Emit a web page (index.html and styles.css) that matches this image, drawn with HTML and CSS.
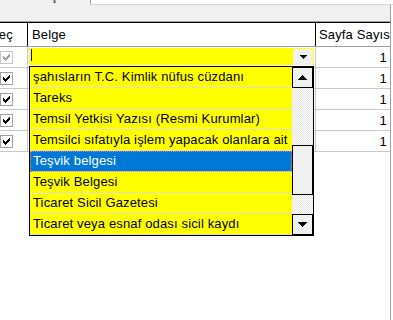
FILE: index.html
```html
<!DOCTYPE html>
<html lang="tr">
<head>
    <meta charset="UTF-8">
    <title>Belge Listesi</title>
    <link rel="stylesheet" href="styles.css">
</head>
<body>
    <div class="panel">
        <div class="toolbar">
            <span class="toolbar-label">ş</span>
            <div class="toolbar-input"></div>
        </div>
        <div class="grid">
            <div class="grid-row grid-head">
                <div class="cell c-sel"><span class="head-clip">Seç</span></div>
                <div class="cell c-doc">Belge</div>
                <div class="cell c-pages">Sayfa Sayısı</div>
            </div>
            <div class="grid-row">
                <div class="cell c-sel">
                    <span class="check check-dim">
                        <svg width="7" height="7" viewBox="0 0 7 7" shape-rendering="crispEdges"><path d="M6 0h1v1h-1zM5 1h2v1h-2zM0 2h1v1h-1zM4 2h3v1h-3zM0 3h2v1h-2zM3 3h3v1h-3zM0 4h5v1h-5zM1 5h3v1h-3zM2 6h1v1h-1z"/></svg>
                    </span>
                </div>
                <div class="cell c-doc editing">
                    <div class="editor">
                        <span class="caret"></span>
                        <span class="editor-button">
                            <svg width="7" height="4" viewBox="0 0 7 4" shape-rendering="crispEdges"><path d="M0 0h7v1h-1v1h-1v1h-1v1h-1v-1h-1v-1h-1v-1h-1z"/></svg>
                        </span>
                    </div>
                </div>
                <div class="cell c-pages">1</div>
            </div>
            <div class="grid-row">
                <div class="cell c-sel">
                    <span class="check">
                        <svg width="7" height="7" viewBox="0 0 7 7" shape-rendering="crispEdges"><path d="M6 0h1v1h-1zM5 1h2v1h-2zM0 2h1v1h-1zM4 2h3v1h-3zM0 3h2v1h-2zM3 3h3v1h-3zM0 4h5v1h-5zM1 5h3v1h-3zM2 6h1v1h-1z"/></svg>
                    </span>
                </div>
                <div class="cell c-doc"></div>
                <div class="cell c-pages">1</div>
            </div>
            <div class="grid-row">
                <div class="cell c-sel">
                    <span class="check">
                        <svg width="7" height="7" viewBox="0 0 7 7" shape-rendering="crispEdges"><path d="M6 0h1v1h-1zM5 1h2v1h-2zM0 2h1v1h-1zM4 2h3v1h-3zM0 3h2v1h-2zM3 3h3v1h-3zM0 4h5v1h-5zM1 5h3v1h-3zM2 6h1v1h-1z"/></svg>
                    </span>
                </div>
                <div class="cell c-doc"></div>
                <div class="cell c-pages">1</div>
            </div>
            <div class="grid-row">
                <div class="cell c-sel">
                    <span class="check">
                        <svg width="7" height="7" viewBox="0 0 7 7" shape-rendering="crispEdges"><path d="M6 0h1v1h-1zM5 1h2v1h-2zM0 2h1v1h-1zM4 2h3v1h-3zM0 3h2v1h-2zM3 3h3v1h-3zM0 4h5v1h-5zM1 5h3v1h-3zM2 6h1v1h-1z"/></svg>
                    </span>
                </div>
                <div class="cell c-doc"></div>
                <div class="cell c-pages">1</div>
            </div>
            <div class="grid-row">
                <div class="cell c-sel">
                    <span class="check">
                        <svg width="7" height="7" viewBox="0 0 7 7" shape-rendering="crispEdges"><path d="M6 0h1v1h-1zM5 1h2v1h-2zM0 2h1v1h-1zM4 2h3v1h-3zM0 3h2v1h-2zM3 3h3v1h-3zM0 4h5v1h-5zM1 5h3v1h-3zM2 6h1v1h-1z"/></svg>
                    </span>
                </div>
                <div class="cell c-doc"></div>
                <div class="cell c-pages">1</div>
            </div>
        </div>

        <!-- open combo list, drawn over the grid -->
        <div class="dropdown">
            <div class="dropdown-items">
                <div class="item">şahısların T.C. Kimlik nüfus cüzdanı</div>
                <div class="item">Tareks</div>
                <div class="item">Temsil Yetkisi Yazısı (Resmi Kurumlar)</div>
                <div class="item">Temsilci sıfatıyla işlem yapacak olanlara ait</div>
                <div class="item selected">Teşvik belgesi</div>
                <div class="item">Teşvik Belgesi</div>
                <div class="item">Ticaret Sicil Gazetesi</div>
                <div class="item">Ticaret veya esnaf odası sicil kaydı</div>
            </div>
            <div class="scrollbar">
                <div class="scroll-btn">
                    <svg width="9" height="5" viewBox="0 0 9 5" shape-rendering="crispEdges"><path d="M4 0h1v1h1v1h1v1h1v1h1v1h-9v-1h1v-1h1v-1h1v-1h1z"/></svg>
                </div>
                <div class="scroll-track">
                    <div class="scroll-thumb"></div>
                </div>
                <div class="scroll-btn">
                    <svg width="9" height="5" viewBox="0 0 9 5" shape-rendering="crispEdges"><path d="M0 0h9v1h-1v1h-1v1h-1v1h-1v1h-1v-1h-1v-1h-1v-1h-1v-1h-1z"/></svg>
                </div>
            </div>
        </div>
    </div>
</body>
</html>
```

FILE: styles.css
```css
* {
    box-sizing: border-box;
}
body {
    margin: 0;
    width: 393px;
    height: 320px;
    overflow: hidden;
    background-color: #fff;
    font-family: "Liberation Sans", Arial, sans-serif;
    font-size: 13px;
    letter-spacing: 0.15px;
    color: #000;
}
.panel {
    position: relative;
    width: 391px;
    height: 320px;
    border-right: 1px solid #a0a0a0;
}
.toolbar {
    display: flex;
    height: 21px;
    background-color: #f0f0f0;
}
.toolbar-label {
    margin: -11px 0 0 51px;
    width: 39px;
    height: 13px;
    line-height: 13px;
}
.toolbar-input {
    flex: 1;
    height: 5px;
    margin-right: -3px;
    background-color: #fff;
    border-left: 1px solid #a0a0a0;
    border-bottom: 1px solid #d9d9d9;
}
.grid {
    border-top: 1px solid #a0a0a0;
}
.grid-row {
    display: flex;
    height: 21px;
    border-bottom: 1px solid #c8c8c8;
}
.grid-head {
    height: 25px;
    border-top: 1px solid #000;
    border-bottom-color: #a0a0a0;
}
.cell {
    display: flex;
    align-items: center;
    overflow: hidden;
    white-space: nowrap;
}
.c-sel {
    width: 28px;
    border-right: 1px solid #c8c8c8;
}
.c-doc {
    width: 288px;
    border-right: 1px solid #c8c8c8;
}
.c-pages {
    flex: 1;
    justify-content: flex-end;
    padding-right: 3px;
}
.grid-head .cell {
    border-right-color: #000;
}
.grid-head .c-doc {
    padding-left: 4px;
}
.grid-head .c-pages {
    justify-content: flex-start;
    padding-left: 3px;
}
.head-clip {
    margin-left: -10px;
}
.check {
    display: flex;
    align-items: center;
    justify-content: center;
    width: 13px;
    height: 13px;
    background-color: #fff;
    border: 1px solid #a0a0a0;
}
.check svg {
    fill: #000;
}
.check-dim {
    border-color: #c8c8c8;
}
.check-dim svg {
    fill: #a0a0a0;
}
.c-doc.editing {
    align-items: flex-start;
    padding: 1px 1px 0;
}
.editor {
    flex: 1;
    display: flex;
    justify-content: space-between;
    height: 17px;
    padding-right: 1px;
    background-color: #ff0;
}
.caret {
    width: 1px;
    height: 12px;
    margin: 1px 0 0 2px;
    background-color: #00f;
}
.editor-button {
    display: flex;
    align-items: center;
    justify-content: center;
    width: 20px;
    height: 16px;
    margin-top: 1px;
    background-color: #f0f0f0;
}
.dropdown {
    position: absolute;
    left: 29px;
    top: 66px;
    width: 285px;
    height: 170px;
    display: flex;
    background-color: #fff;
    border: 1px solid #000;
}
.dropdown-items {
    width: 262px;
}
.item {
    height: 21px;
    line-height: 20px;
    padding-left: 3px;
    background-color: #ff0;
    border-bottom: 1px solid #dcdcdc;
    white-space: nowrap;
    overflow: hidden;
}
.item.selected {
    background-color: #0078d7;
    color: #fff;
    outline: 1px dotted #f08c3c;
    outline-offset: -1px;
}
.scrollbar {
    display: flex;
    flex-direction: column;
    width: 21px;
    background-image: repeating-conic-gradient(#e3e3e3 0 25%, #fff 0 50%);
    background-size: 2px 2px;
}
.scroll-btn {
    display: flex;
    align-items: center;
    justify-content: center;
    height: 21px;
    background-color: #f0f0f0;
    border: 1px solid #000;
}
.scroll-track {
    flex: 1;
}
.scroll-thumb {
    height: 50px;
    margin-top: 57px;
    background-color: #f0f0f0;
    border: 1px solid #000;
}
```
